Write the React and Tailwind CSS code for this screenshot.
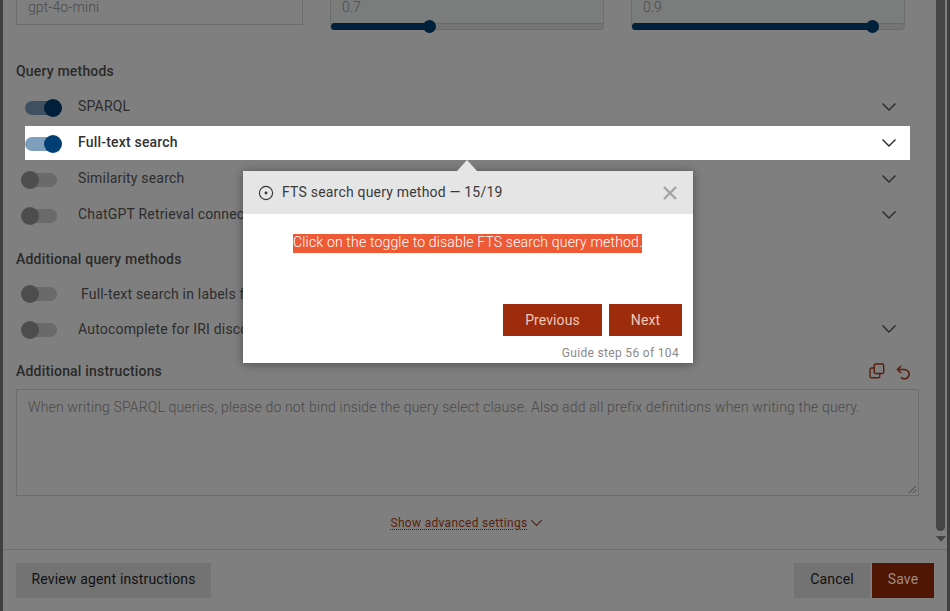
import React from "react";

const Chevron = ({ className = "", color = "#2b2b2b" }) => (
  <svg width="16" height="10" viewBox="0 0 16 10" fill="none" className={className}>
    <path d="M1.5 1.5 L8 8 L14.5 1.5" stroke={color} strokeWidth="1.4" />
  </svg>
);

const Toggle = ({ on, lit }) => {
  const track = on ? (lit ? "bg-[#7e9fbb]" : "bg-[#3f5060]") : "bg-[#6a6a6a]";
  const knob = on ? (lit ? "bg-[#003e74]" : "bg-[#001f3a]") : "bg-[#4d4d4d]";
  return (
    <span className={`relative block w-[32px] h-[14px] rounded-full ${track}`}>
      <span className={`absolute top-[-2px] w-[18px] h-[18px] rounded-full ${on ? "right-[-5px]" : "left-[-4px]"} ${knob}`} />
    </span>
  );
};

const MethodRow = ({ label, on, lit, chevron = true, labelClass = "ml-[21px] mt-[7px]" }) => (
  <div className={`flex items-start pr-[13px] w-[885px] ml-[22px] h-[34px] mb-[2px] ${lit ? "bg-white" : ""}`}>
    <span className="w-[32px] mt-[11px] shrink-0"><Toggle on={on} lit={lit} /></span>
    <span className={`${labelClass} text-[14px] leading-[18px] tracking-[0.19px] ${lit ? "font-medium text-[#333]" : "text-[#2d2d2d]"}`}>{label}</span>
    {chevron && <Chevron className="ml-auto mt-[12px]" />}
  </div>
);

const Slider = ({ value, pct }) => (
  <div className="w-[274px]">
    <div className="h-[24px] bg-[#7a7d7c] border border-[#6d6d6d] border-t-0 text-[14px] font-light text-[#4a4a4a] pl-[11px] leading-[14px]">{value}</div>
    <div className="relative h-[7px] -mt-[1px] rounded-full bg-[#757575] border border-[#6a6a6a]">
      <div className="absolute left-0 top-[-1px] h-[7px] rounded-full bg-[#00203c]" style={{ width: pct }} />
      <div className="absolute top-[-4px] w-[13px] h-[13px] rounded-full bg-[#00203c]" style={{ left: `calc(${pct} - 6px)` }} />
    </div>
  </div>
);

export default function App() {
  return (
    <div className="relative w-[950px] h-[611px] overflow-hidden bg-[#7f7f7f] flex text-[#2d2d2d] font-['Roboto',sans-serif]">
      <div className="w-[3px] bg-[#3f3f3f] shrink-0" />
      <div className="flex-1 flex flex-col min-w-0">
        <div className="h-[550px] flex shrink-0 border-b border-[#6f6f6f]">
          <div className="w-[933px] shrink-0">
            <div className="h-[32px] flex pl-[13px] items-start">
              <div className="w-[287px] h-[25px] border border-[#6d6d6d] border-t-0 text-[14px] tracking-[0.1px] font-light text-[#4a4a4a] pl-[11px] leading-[14px]">gpt-4o-mini</div>
              <div className="ml-[27px]"><Slider value="0.7" pct="36%" /></div>
              <div className="ml-[27px]"><Slider value="0.9" pct="88.4%" /></div>
            </div>
            <h3 className="pl-[13px] mt-[30px] text-[14px] leading-[18px] tracking-[0.19px] font-medium text-[#2a2a2a]">Query methods</h3>
            <div className="mt-[10px]">
              <MethodRow label="SPARQL" on />
              <MethodRow label="Full-text search" on lit />
              <MethodRow label="Similarity search" />
              <MethodRow label="ChatGPT Retrieval connection" />
            </div>
            <h3 className="pl-[13px] mt-[18px] text-[14px] leading-[18px] tracking-[0.19px] font-medium text-[#2a2a2a]">Additional query methods</h3>
            <div className="mt-[8px]">
              <MethodRow label="Full-text search in labels for IRI discovery" chevron={false} labelClass="ml-[24px] mt-[9px]" />
              <MethodRow label="Autocomplete for IRI discovery" labelClass="ml-[21px] mt-[8px]" />
            </div>
            <div className="flex items-center pl-[13px] pr-[24px] mt-[16px] h-[18px]">
              <h3 className="text-[14px] tracking-[0.19px] font-medium text-[#2a2a2a]">Additional instructions</h3>
              <svg width="16" height="16" viewBox="0 0 16 16" fill="none" stroke="#5a1f0c" strokeWidth="1.4" className="ml-auto">
                <rect x="5.2" y="1" width="9.5" height="9.5" rx="1.6" />
                <path d="M5 5 H2.6 A1.6 1.6 0 0 0 1 6.6 V13.2 A1.6 1.6 0 0 0 2.6 14.8 H9.2 A1.6 1.6 0 0 0 10.8 13.2 V10.8" />
              </svg>
              <svg width="16" height="16" viewBox="0 0 16 16" fill="none" stroke="#5a1f0c" strokeWidth="1.6" className="ml-[11px] translate-y-[1px] -translate-x-[1px]">
                <path d="M2.5 5.5 H9.5 A4.7 4.7 0 1 1 6 13.4" />
                <path d="M6 2 L2.5 5.5 L6 9" />
              </svg>
            </div>
            <div className="ml-[13px] mt-[9px] relative w-[903px] h-[107px] border border-[#6d6d6d] px-[11px] pt-[8px] text-[14px] leading-[18px] tracking-[0.155px] font-light text-[#4a4a4a]">
              When writing SPARQL queries, please do not bind inside the query select clause. Also add all prefix definitions when writing the query.
              <svg width="9" height="9" viewBox="0 0 9 9" className="absolute right-[1px] bottom-[1px]" stroke="#333" strokeWidth="0.8">
                <path d="M1 8 L8 1 M5 8 L8 5" />
              </svg>
            </div>
            <div className="flex items-center justify-center mt-[18px] h-[18px] pr-[6px] text-[12px] tracking-[0.32px] text-[#5a1f0c]">
              <span className="underline decoration-dotted underline-offset-2">Show advanced settings</span>
              <Chevron className="ml-[2px] w-[13px] h-[8px]" color="#5a1f0c" />
            </div>
          </div>
          <div className="w-[9px] relative shrink-0">
            <div className="h-[531px] bg-[#454545] rounded-b-full" />
            <div className="mt-[5px] w-0 h-0 border-x-[5px] border-x-transparent border-t-[6px] border-t-[#454545]" />
          </div>
        </div>
        <div className="flex-1 flex items-start pt-[13px] pl-[13px] pr-[13px] text-[14px] tracking-[0.17px] text-[#111]">
          <div className="w-[195px] h-[35px] pb-[2px] bg-[#737373] flex items-center justify-center">Review agent instructions</div>
          <div className="ml-auto w-[76px] h-[35px] pb-[2px] bg-[#737373] flex items-center justify-center">Cancel</div>
          <div className="ml-[2px] w-[62px] h-[35px] pb-[2px] bg-[#4f1603] text-[#a08a82] flex items-center justify-center">Save</div>
        </div>
      </div>
      <div className="w-[3px] bg-[#3f3f3f] shrink-0" />

      <div className="absolute left-[243px] top-[171px] w-[450px] h-[192px] bg-white shadow-[0_1px_10px_rgba(0,0,0,0.4)]">
        <div className="absolute left-[214px] top-[-11px] w-0 h-0 border-x-[10px] border-x-transparent border-b-[11px] border-b-[#e5e5e5]" />
        <div className="h-[43px] bg-[#e5e5e5] flex items-center pl-[15px] pr-[16px] text-[14px] tracking-[0.2px] text-[#3a3a3a]">
          <svg width="16" height="16" viewBox="0 0 16 16" fill="none">
            <circle cx="8" cy="8" r="6.6" stroke="#333" strokeWidth="1.1" />
            <circle cx="8" cy="8" r="1.4" fill="#333" />
          </svg>
          <span className="ml-[8px]">FTS search query method — 15/19</span>
          <svg width="14" height="14" viewBox="0 0 14 14" className="ml-auto" stroke="#a3a3a3" strokeWidth="2.4">
            <path d="M1 1 L13 13 M13 1 L1 13" />
          </svg>
        </div>
        <div className="flex justify-center mt-[20px]">
          <span className="bg-[#ee5a36] text-white text-[14px] tracking-[0.17px] font-light leading-[17px] pb-[2px] mr-[1px] w-[349px] text-center whitespace-nowrap">Click on the toggle to disable FTS search query method.</span>
        </div>
        <div className="flex justify-end gap-[7px] mt-[51px] pr-[11px] text-[14px] tracking-[0.1px]">
          <div className="w-[99px] h-[32px] bg-[#9c2c0b] text-[#f0c8bb] flex items-center justify-center">Previous</div>
          <div className="w-[73px] h-[32px] bg-[#9c2c0b] text-[#f0c8bb] flex items-center justify-center">Next</div>
        </div>
        <div className="text-right pr-[14px] mt-[10px] text-[12px] tracking-[0.33px] leading-[14px] text-[#8a8a8a]">Guide step 56 of 104</div>
      </div>
    </div>
  );
}
